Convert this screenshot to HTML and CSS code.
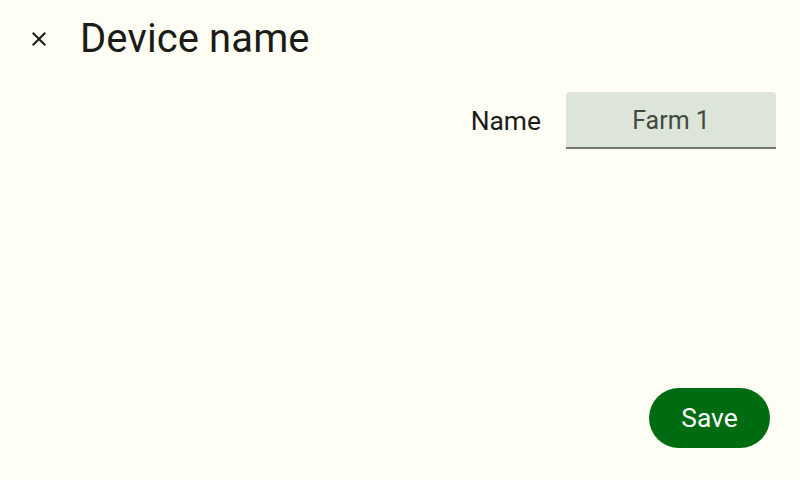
FILE: index.html
```html
<!DOCTYPE html>
<html lang="en">
<head>
<meta charset="utf-8">
<title>Device name</title>
<link rel="stylesheet" href="styles.css">
</head>
<body>
<div class="screen">
  <header class="top">
    <button class="close" aria-label="Close">
      <svg viewBox="0 0 24 24" width="24" height="24"><path d="M19 6.41L17.59 5 12 10.59 6.41 5 5 6.41 10.59 12 5 17.59 6.41 19 12 13.41 17.59 19 19 17.59 13.41 12z"/></svg>
    </button>
    <h1 class="title">Device name</h1>
  </header>
  <div class="form-row">
    <label class="label" for="name">Name</label>
    <div class="field" id="name">Farm 1</div>
  </div>
  <div class="actions">
    <button class="save">Save</button>
  </div>
</div>
</body>
</html>
```
FILE: styles.css
```css
* { box-sizing: border-box; }
html, body {
  margin: 0;
  padding: 0;
  background: #fefef5;
}
body {
  font-family: Roboto, "Noto Sans", sans-serif;
  color: #1a1c18;
}
.screen {
  width: 800px;
  height: 480px;
  display: flex;
  flex-direction: column;
}
.top {
  display: flex;
  align-items: center;
  padding: 17px 0 0 27px;
  gap: 29px;
  height: 61px;
}
.close {
  width: 24px;
  height: 24px;
  padding: 0;
  border: 0;
  background: none;
  display: flex;
  align-items: center;
  justify-content: center;
}
.close svg { fill: #1a1c18; display: block; }
.title {
  margin: 0;
  font-size: 40px;
  font-weight: 400;
  line-height: 44px;
  letter-spacing: 0.1px;
  color: #1a1c18;
}
.form-row {
  display: flex;
  justify-content: flex-end;
  align-items: center;
  gap: 25px;
  margin-top: 31px;
  padding-right: 24px;
}
.label {
  font-size: 26.4px;
  line-height: 32px;
  color: #1a1c18;
}
.field {
  width: 210px;
  height: 57px;
  background: #dde5da;
  border-radius: 4px 4px 0 0;
  border-bottom: 2px solid #72796f;
  display: flex;
  align-items: center;
  justify-content: center;
  padding-top: 1px;
  font-size: 25px;
  color: #42493f;
}
.actions {
  margin-top: auto;
  display: flex;
  justify-content: flex-end;
  padding: 0 30px 32px 0;
}
.save {
  width: 121px;
  height: 60px;
  padding: 0;
  border: 0;
  border-radius: 30px;
  background: #006c11;
  color: #ffffff;
  font-family: Roboto, "Noto Sans", sans-serif;
  font-size: 26.4px;
}
```
